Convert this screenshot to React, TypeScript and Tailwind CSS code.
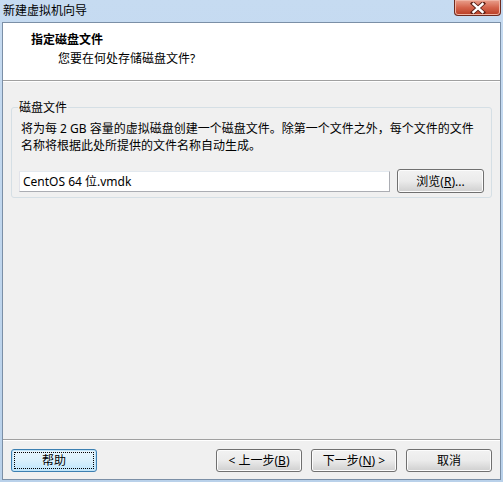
import React from "react";

const font = { fontFamily: '"Noto Sans", "Noto Sans CJK SC", sans-serif' };

function WinButton({ children, focused = false }: { children: React.ReactNode; focused?: boolean }) {
  if (focused) {
    return (
      <div className="w-[86px] h-[23px] rounded-[3px] border border-[#3c7fb1] bg-gradient-to-b from-[#eaf6fd] via-[#d9f0fc] to-[#bee6fd] p-[2px] shadow-[inset_0_0_0_1px_#c0e4f8]">
        <div className="w-full h-full border border-dotted border-black flex items-center justify-center text-[12px] leading-[15px] text-black">
          {children}
        </div>
      </div>
    );
  }
  return (
    <div className="w-[86px] h-[23px] rounded-[3px] border border-[#707070] bg-gradient-to-b from-[#f2f2f2] via-[#ebebeb] to-[#cfcfcf] shadow-[inset_0_0_0_1px_#fcfcfc] flex items-center justify-center text-[12px] leading-[15px] text-black">
      {children}
    </div>
  );
}

export default function App() {
  return (
    <div className="w-[503px] h-[482px] flex flex-col bg-gradient-to-b from-[#c6dbf1] to-[#b9d1ea] overflow-hidden" style={font}>
      {/* Title bar */}
      <div className="h-[22px] flex items-start justify-between shrink-0">
        <div className="pl-[3px] pt-[2px] text-[12px] leading-[17px] text-black">新建虚拟机向导</div>
        <div className="mr-[2px] w-[47px] h-[16px] rounded-b-[4px] border border-t-0 border-[#6d2a1e] bg-gradient-to-b from-[#e9a08d] via-[#d4644c] to-[#b83c22] flex items-center justify-center shadow-[inset_0_0_0_1px_#f0b4a4]">
          <svg width="16" height="12" viewBox="0 0 16 12">
            <path d="M3 1.5 L13 10.5 M13 1.5 L3 10.5" stroke="#5a1f15" strokeWidth="4.2" strokeLinecap="square" />
            <path d="M3.5 2 L12.5 10 M12.5 2 L3.5 10" stroke="#ffffff" strokeWidth="2.4" strokeLinecap="square" />
          </svg>
        </div>
      </div>
      {/* Client */}
      <div className="mx-[2px] mb-[2px] flex-1 border border-[#7b8fa6] bg-[#f0f0f0] flex flex-col">
        {/* Header */}
        <div className="h-[57px] bg-white shrink-0 pt-[8px]">
          <div className="pl-[28px] text-[12px] leading-[17px] font-bold text-black">指定磁盘文件</div>
          <div className="pl-[55px] mt-[2px] text-[12px] leading-[17px] text-black">您要在何处存储磁盘文件?</div>
        </div>
        <div className="h-px bg-[#a0a0a0] shrink-0" />
        <div className="h-px bg-white shrink-0" />
        {/* Body */}
        <div className="flex-1 pt-[17px] px-[8px]">
          <fieldset className="border border-[#d5dfe5] rounded-[3px] pl-[6px] pr-[7px] pt-[4px] pb-[4px] min-w-0">
            <legend className="px-[1px] text-[12px] leading-[17px] text-black">磁盘文件</legend>
            <div className="ml-[3px] text-[12px] leading-[17px] text-black">
              <div>将为每 2 GB 容量的虚拟磁盘创建一个磁盘文件。除第一个文件之外，每个文件的文件</div>
              <div>名称将根据此处所提供的文件名称自动生成。</div>
            </div>
            <div className="mt-[15px] ml-[1px] flex items-center gap-[7px] h-[24px]">
              <div className="flex-1 h-[21px] border border-[#abadb3] border-t-[#e3e9ef] bg-white border-l-[#e2e3ea] flex items-center pl-[3px] text-[12px] leading-[15px] text-black">
                CentOS 64 位.vmdk
              </div>
              <div className="w-[87px] h-[24px] rounded-[3px] border border-[#707070] bg-gradient-to-b from-[#f2f2f2] via-[#ebebeb] to-[#cfcfcf] shadow-[inset_0_0_0_1px_#fcfcfc] flex items-center justify-center text-[12px] leading-[15px] text-black">
                浏览(<span className="underline">R</span>)...
              </div>
            </div>
          </fieldset>
        </div>
        {/* Footer */}
        <div className="h-px bg-[#a0a0a0] shrink-0" />
        <div className="h-px bg-white shrink-0" />
        <div className="h-[38px] shrink-0 pt-[8px] px-[8px] flex items-start">
          <WinButton focused>帮助</WinButton>
          <div className="flex-1" />
          <div className="flex gap-[9px]">
            <WinButton>&lt; 上一步(<span className="underline">B</span>)</WinButton>
            <WinButton>下一步(<span className="underline">N</span>) &gt;</WinButton>
            <WinButton>取消</WinButton>
          </div>
        </div>
      </div>
    </div>
  );
}
